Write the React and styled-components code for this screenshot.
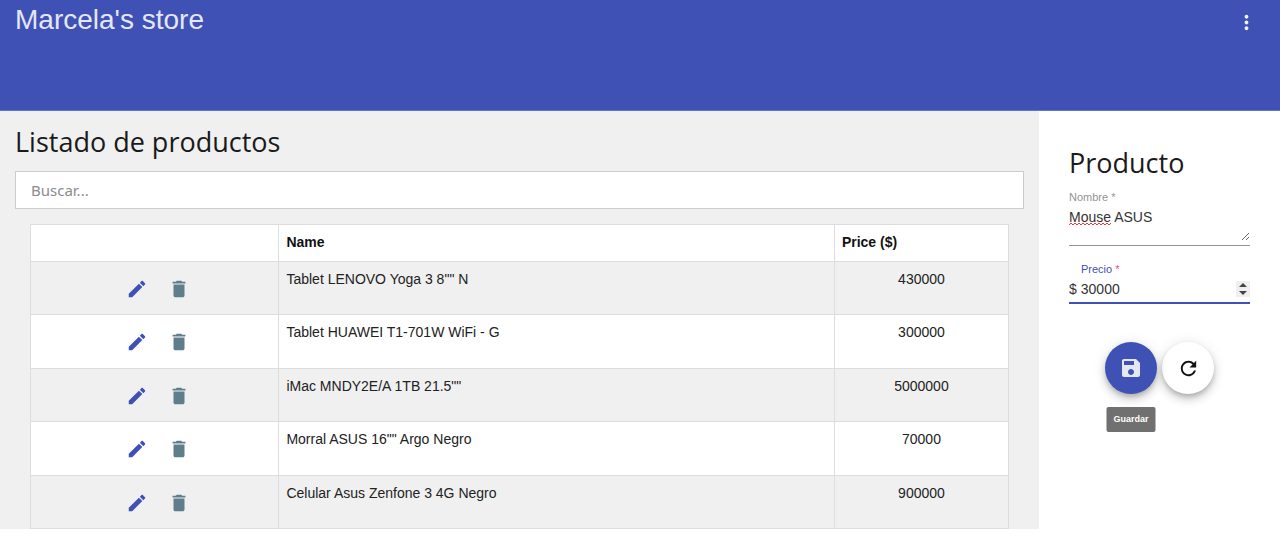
import React, { useState } from 'react';
import styled, { createGlobalStyle, css } from 'styled-components';

const GlobalStyle = createGlobalStyle`
  * { box-sizing: border-box; }
  body {
    margin: 0;
    background: #fff;
    color: #222;
    font: 14px/20px "Liberation Sans", Arial, sans-serif;
  }
`;

const Header = styled.header`
  display: flex;
  align-items: flex-start;
  justify-content: space-between;
  height: 111px;
  padding: 4px 20px 0 15px;
  background: #3f51b5;
  border-bottom: 1px solid #6674c4;
`;

const Brand = styled.h1`
  margin: 0;
  color: #e4e7f6;
  font-size: 28px;
  font-weight: 400;
  line-height: 32px;
`;

const MenuButton = styled.button`
  display: grid;
  place-items: center;
  width: 28px;
  height: 36px;
  padding: 0;
  border: 0;
  background: none;
  color: #f0f2fb;
`;

const Layout = styled.div`
  display: flex;
  align-items: stretch;
`;

const Main = styled.main`
  flex: 1;
  min-width: 0;
  padding: 11px 15px 0;
  background: #f0f0f0;
`;

const Title = styled.h2`
  margin: 0;
  color: #1a1a1a;
  font: 400 27px/40px "Open Sans", "Noto Sans", sans-serif;
`;

const Search = styled.input`
  display: block;
  width: 100%;
  height: 38px;
  margin: 9px 0 15px;
  padding: 0 15px;
  border: 1px solid #ccc;
  border-radius: 0;
  background: #fff;
  font: 15px/20px "Noto Sans", "Open Sans", sans-serif;
  outline: 0;
  &::placeholder { color: #8c8c8c; opacity: 1; }
`;

const TableWrap = styled.div`
  padding: 0 15px;
`;

const Table = styled.table`
  width: 100%;
  table-layout: fixed;
  border-collapse: separate;
  border-spacing: 0;
  border: solid #ddd;
  border-width: 1px 0 0 1px;
`;

const cell = css`
  padding: 7px 7px 8px;
  border: solid #ddd;
  border-width: 0 1px 1px 0;
  text-align: left;
  vertical-align: top;
`;

const Th = styled.th`
  ${cell}
  width: ${(p) => p.$width};
  height: 37px;
  background: #fff;
  color: #111;
`;

const Td = styled.td`
  ${cell}
  text-align: ${(p) => (p.$center ? 'center' : 'left')};
`;

const Row = styled.tr`
  height: 53px;
  background: #fff;
  &:nth-child(odd) { background: #f0f0f0; }
  &:nth-child(even) { height: 54px; }
`;

const Actions = styled.div`
  display: flex;
  justify-content: center;
  gap: 22px;
  padding: 9px 0 0 5px;
`;

const IconButton = styled.button`
  width: 20px;
  height: 20px;
  padding: 0;
  border: 0;
  background: none;
  color: ${(p) => p.$color};
  svg { display: block; }
`;

const Sidebar = styled.aside`
  width: 241px;
  padding: 32px 30px 0;
`;

const SideTitle = styled(Title)`
  margin-bottom: 7px;
`;

const Field = styled.div`
  position: relative;
  display: flex;
  flex-direction: column;
  border-bottom: ${(p) => (p.$active ? '2px solid #3f51b5' : '1px solid #949494')};
  margin-top: ${(p) => (p.$active ? '16px' : '0')};
`;

const Label = styled.label`
  font-size: 11px;
  line-height: 14px;
  color: ${(p) => (p.$active ? '#3f51b5' : '#949494')};
  padding-left: ${(p) => (p.$active ? '12px' : '0')};
`;

const Required = styled.span`
  color: ${(p) => (p.$active ? '#ff4081' : 'inherit')};
`;

const NameArea = styled.textarea`
  display: block;
  width: 100%;
  height: 37px;
  margin-bottom: 4px;
  padding: 3px 0;
  border: 0;
  outline: 0;
  background: none;
  color: #333;
  font: 14px/20px "Liberation Sans", Arial, sans-serif;
  overflow: hidden;
  resize: vertical;
`;

const SpellMark = styled.svg`
  position: absolute;
  left: 0;
  top: 32px;
`;

const PriceLine = styled.div`
  display: flex;
  align-items: center;
  gap: 4px;
  height: 26px;
  color: #333;
`;

const PriceInput = styled.input`
  flex: 1;
  min-width: 0;
  height: 18px;
  padding: 0;
  border: 0;
  outline: 0;
  background: none;
  color: #333;
  font: 14px/18px "Liberation Sans", Arial, sans-serif;
  appearance: textfield;
  &::-webkit-inner-spin-button { appearance: none; margin: 0; }
`;

const Stepper = styled.div`
  display: flex;
  flex-direction: column;
  padding: 1px 0;
  background: #efefef;
`;

const StepButton = styled.button`
  display: grid;
  place-items: center;
  width: 14px;
  height: 7px;
  padding: 0;
  border: 0;
  background: none;
  color: #444;
`;

const ButtonRow = styled.div`
  display: flex;
  justify-content: center;
  gap: 5px;
  margin-top: 38px;
`;

const RoundWrap = styled.div`
  position: relative;
`;

const RoundButton = styled.button`
  display: grid;
  place-items: center;
  width: 52px;
  height: 52px;
  padding: 0;
  border: 0;
  border-radius: 50%;
  background: ${(p) => (p.$primary ? '#3f51b5' : '#fff')};
  color: ${(p) => (p.$primary ? '#e4e7f6' : '#111')};
  box-shadow: 0 3px 5px -1px rgba(0, 0, 0, 0.2), 0 6px 10px rgba(0, 0, 0, 0.14),
    0 1px 14px rgba(0, 0, 0, 0.1);
`;

const Tooltip = styled.span`
  position: absolute;
  top: 65px;
  left: 50%;
  transform: translateX(-50%);
  padding: 0 7px;
  border-radius: 2px;
  background: #707070;
  color: #fff;
  font-size: 9px;
  font-weight: 700;
  line-height: 25px;
`;

const Icon = ({ d, size }) => (
  <svg width={size} height={size} viewBox="0 0 24 24" fill="currentColor" aria-hidden="true">
    <path d={d} />
  </svg>
);

const Caret = ({ d }) => (
  <svg width="8" height="5" viewBox="0 0 8 5" fill="currentColor" aria-hidden="true">
    <path d={d} />
  </svg>
);

const icons = {
  more: 'M12 8c1.1 0 2-.9 2-2s-.9-2-2-2-2 .9-2 2 .9 2 2 2zm0 2c-1.1 0-2 .9-2 2s.9 2 2 2 2-.9 2-2-.9-2-2-2zm0 6c-1.1 0-2 .9-2 2s.9 2 2 2 2-.9 2-2-.9-2-2-2z',
  edit: 'M3 17.25V21h3.75L17.81 9.94l-3.75-3.75L3 17.25zM20.71 7.04c.39-.39.39-1.02 0-1.41l-2.34-2.34c-.39-.39-1.02-.39-1.41 0l-1.83 1.83 3.75 3.75 1.83-1.83z',
  trash: 'M6 19c0 1.1.9 2 2 2h8c1.1 0 2-.9 2-2V7H6v12zM19 4h-3.5l-1-1h-5l-1 1H5v2h14V4z',
  save: 'M17 3H5c-1.11 0-2 .9-2 2v14c0 1.1.89 2 2 2h14c1.1 0 2-.9 2-2V7l-4-4zm-5 16c-1.66 0-3-1.34-3-3s1.34-3 3-3 3 1.34 3 3-1.34 3-3 3zm3-10H5V5h10v4z',
  refresh: 'M17.65 6.35C16.2 4.9 14.21 4 12 4c-4.42 0-7.99 3.58-7.99 8s3.57 8 7.99 8c3.73 0 6.84-2.55 7.73-6h-2.08c-.82 2.33-3.04 4-5.65 4-3.31 0-6-2.69-6-6s2.69-6 6-6c1.66 0 3.14.69 4.22 1.78L13 11h7V4l-2.35 2.35z',
};

const products = [
  { name: 'Tablet LENOVO Yoga 3 8"" N', price: 430000 },
  { name: 'Tablet HUAWEI T1-701W WiFi - G', price: 300000 },
  { name: 'iMac MNDY2E/A 1TB 21.5""', price: 5000000 },
  { name: 'Morral ASUS 16"" Argo Negro', price: 70000 },
  { name: 'Celular Asus Zenfone 3 4G Negro', price: 900000 },
];

export default function App() {
  const [name, setName] = useState('Mouse ASUS');
  const [price, setPrice] = useState('30000');
  const step = (by) => setPrice((value) => String(Number(value) + by));

  return (
    <>
      <GlobalStyle />
      <Header>
        <Brand>Marcela's store</Brand>
        <MenuButton aria-label="Menu"><Icon d={icons.more} size={23} /></MenuButton>
      </Header>
      <Layout>
        <Main>
          <Title>Listado de productos</Title>
          <Search type="text" placeholder="Buscar..." aria-label="Buscar" />
          <TableWrap>
            <Table>
              <thead>
                <tr>
                  <Th $width="25.4%" aria-label="Acciones" />
                  <Th $width="56.8%">Name</Th>
                  <Th $width="17.8%">Price ($)</Th>
                </tr>
              </thead>
              <tbody>
                {products.map((p) => (
                  <Row key={p.name}>
                    <Td>
                      <Actions>
                        <IconButton $color="#3f51b5" aria-label="Editar"><Icon d={icons.edit} size={22} /></IconButton>
                        <IconButton $color="#607d8b" aria-label="Eliminar"><Icon d={icons.trash} size={22} /></IconButton>
                      </Actions>
                    </Td>
                    <Td>{p.name}</Td>
                    <Td $center>{p.price}</Td>
                  </Row>
                ))}
              </tbody>
            </Table>
          </TableWrap>
        </Main>
        <Sidebar>
          <SideTitle>Producto</SideTitle>
          <Field>
            <Label htmlFor="nombre">Nombre <Required>*</Required></Label>
            <NameArea id="nombre" rows={1} spellCheck={false} value={name} onChange={(e) => setName(e.target.value)} />
            <SpellMark width="42" height="4" viewBox="0 0 42 4" fill="none" stroke="#f33" aria-hidden="true">
              <path d="M0 3l2-2 2 2 2-2 2 2 2-2 2 2 2-2 2 2 2-2 2 2 2-2 2 2 2-2 2 2 2-2 2 2 2-2 2 2 2-2 2 2 2-2" />
            </SpellMark>
          </Field>
          <Field $active>
            <Label $active htmlFor="precio">Precio <Required $active>*</Required></Label>
            <PriceLine>
              <span>$</span>
              <PriceInput id="precio" type="number" value={price} onChange={(e) => setPrice(e.target.value)} />
              <Stepper>
                <StepButton type="button" aria-label="Aumentar" onClick={() => step(1)}><Caret d="M4 0l4 4H0z" /></StepButton>
                <StepButton type="button" aria-label="Disminuir" onClick={() => step(-1)}><Caret d="M4 5L0 1h8z" /></StepButton>
              </Stepper>
            </PriceLine>
          </Field>
          <ButtonRow>
            <RoundWrap>
              <RoundButton $primary aria-label="Guardar" aria-describedby="guardar-tip"><Icon d={icons.save} size={24} /></RoundButton>
              <Tooltip role="tooltip" id="guardar-tip">Guardar</Tooltip>
            </RoundWrap>
            <RoundButton aria-label="Recargar"><Icon d={icons.refresh} size={23} /></RoundButton>
          </ButtonRow>
        </Sidebar>
      </Layout>
    </>
  );
}
